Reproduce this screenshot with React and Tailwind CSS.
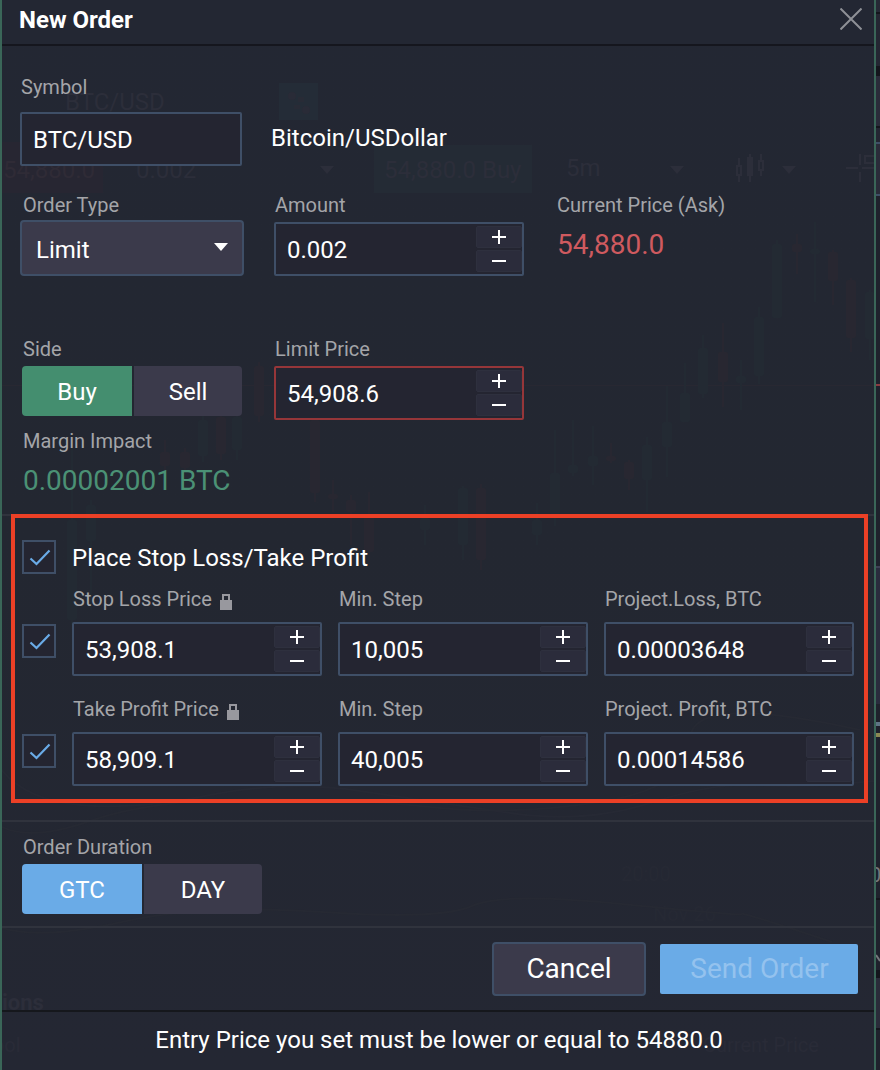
import React, { useState } from 'react';

const CANDLES = [
    // x, wickTop, wickBottom, bodyTop, bodyBottom, up
    [72, 440, 625, 520, 620, true],
    [91, 500, 610, 505, 541, true],
    [165, 440, 470, 452, 466, false],
    [185, 448, 470, 452, 468, false],
    [203, 415, 462, 420, 456, true],
    [221, 405, 460, 417, 454, false],
    [237, 410, 460, 417, 450, true],
    [259, 362, 422, 366, 416, false],
    [315, 415, 502, 420, 493, false],
    [333, 480, 512, 494, 499, false],
    [351, 495, 545, 500, 512, false],
    [369, 492, 560, 515, 552, false],
    [425, 505, 545, 518, 530, true],
    [463, 486, 560, 488, 545, true],
    [481, 484, 570, 488, 560, false],
    [537, 503, 545, 520, 535, true],
    [555, 430, 526, 473, 515, true],
    [573, 420, 476, 465, 473, true],
    [593, 426, 485, 456, 466, true],
    [611, 443, 463, 456, 461, false],
    [629, 460, 490, 462, 479, false],
    [647, 437, 512, 445, 480, true],
    [667, 386, 477, 422, 447, true],
    [685, 363, 422, 393, 422, true],
    [703, 335, 398, 348, 394, true],
    [723, 323, 407, 352, 382, false],
    [741, 360, 410, 376, 383, true],
    [759, 307, 384, 317, 376, true],
    [777, 240, 318, 244, 318, true],
    [797, 234, 274, 244, 252, false],
    [815, 222, 302, 249, 254, true],
    [833, 250, 305, 252, 281, false],
    [851, 278, 352, 280, 338, false],
    [870, 290, 360, 292, 339, true],
];

const Ghost = ({ className, children }) => (
    <span className={`absolute whitespace-nowrap ${className}`}>{children}</span>
);

/* Trading screen showing faintly through the dialog */
const Backdrop = () => (
    <div className='absolute inset-0 overflow-hidden text-[#2c2e3a]' aria-hidden='true'>
        <div className='absolute left-0 top-[142px] w-[101px] h-[51px] bg-[#272632]'></div>
        <div className='absolute left-[277px] top-[83px] w-[39px] h-[37px] bg-[#242c37]'></div>
        <div className='absolute left-[372px] top-[145px] w-[158px] h-[48px] bg-[#242b35]'></div>
        <Ghost className='left-[63px] top-[88px] text-2xl leading-7'>BTC/USD</Ghost>
        <Ghost className='left-[1px] top-[156px] text-2xl leading-7 text-[#2f2b36]'>54,880.0</Ghost>
        <Ghost className='left-[134px] top-[156px] text-2xl leading-7'>0.002</Ghost>
        <Ghost className='left-[382px] top-[156px] text-2xl leading-7'>54,880.0 Buy</Ghost>
        <Ghost className='left-[564px] top-[154px] text-2xl leading-7'>5m</Ghost>
        <Ghost className='left-0 top-[991px] text-[22px] leading-6 font-bold'>ions</Ghost>
        <Ghost className='left-[-9px] top-[1033px] text-xl leading-6 text-[#292b37]'>bol</Ghost>
        <Ghost className='left-[701px] top-[1033px] text-xl leading-6 text-[#292b37]'>Current Price</Ghost>
        <Ghost className='left-[619px] top-[862px] text-xl leading-6 text-[#262934]'>20:00</Ghost>
        <Ghost className='left-[651px] top-[902px] text-xl leading-6 text-[#262934]'>Nov 26</Ghost>
        <svg className='absolute left-[-2px] top-0' width='880' height='1070' fill='none'>
            <g fill='#2c2e3a'>
                <path d='M320 166h14l-7 8z' />
                <path d='M670 166h14l-7 8z' />
                <path d='M782 166h14l-7 8z' />
                <rect x='747' y='157' width='6' height='19' />
                <circle cx='292' cy='96' r='4' fill='#292b37' />
                <circle cx='306' cy='110' r='4' fill='#292b37' />
                <path d='M298 97h6v5h-6zM294 105h6v4h-6z' fill='#282b36' />
            </g>
            <g stroke='#2c2e3a' strokeWidth='2'>
                <path d='M739 158v8M739 175v7M750 154v28M761 154v7M761 170v6' />
                <rect x='737' y='166' width='4' height='9' />
                <rect x='759' y='161' width='4' height='9' />
                <path d='M846 168h12M862 168h12M860 154v11M860 172v10M865 156h12v7h-12z' />
            </g>
            <path d='M0 385.500H874' stroke='#282832' strokeWidth='1' />
            {CANDLES.map(([x, wt, wb, bt, bb, up]) => (
                <g key={x} fill={up ? '#232a33' : '#282731'}>
                    <rect x={x - 1} y={wt} width='2' height={wb - wt} />
                    <rect x={x - 5} y={bt} width='10' height={bb - bt} rx='2' />
                </g>
            ))}
            <path d='M0 768q25 32 80 37t130-10 150-4 150 22 140-10 110-18 114-4' stroke='#262934' strokeWidth='2' />
            <path d='M0 826q30 16 90-5t160-22 180 8 170-5 90-62 170-10' stroke='#262933' strokeWidth='2' />
            <path d='M2 928q40 12 120-6t200-10 150-6 150-2 120 10 90 28' stroke='#262933' strokeWidth='2' />
        </svg>
    </div>
);

const Label = ({ children }) => (
    <div className='flex items-start h-6 pl-px text-xl leading-6 text-[#a4a5a9] whitespace-nowrap'>{children}</div>
);

const LockIcon = () => (
    <svg className='ml-2 mt-[7px]' width='12' height='16' fill='none'>
        <path d='M3 7V1h6v6' stroke='#98989e' strokeWidth='2' />
        <path d='M0 6h12v10H0z' fill='#98989e' />
    </svg>
);

const NumberInput = ({ value, error }) => {
    const [text, setText] = useState(value);

    return (
        <div className={`flex w-[250px] h-[54px] border-2 rounded-[2px] bg-[#242531] ${error ? 'border-[#963639]' : 'border-[#3f4f67]'}`}>
            <input
                className='flex-1 min-w-0 pl-[11px] pt-0.5 text-2xl text-white bg-transparent outline-none'
                value={text}
                onChange={e => setText(e.target.value)}
            />
            <div className='flex flex-col gap-0.5 pt-0.5'>
                <button className='flex items-center justify-center w-[46px] h-[22px] border border-[#2e303e] rounded-[2px] bg-[#2b2c3b]'>
                    <svg width='14' height='14' fill='none' stroke='white' strokeWidth='2'>
                        <path d='M0 7h14M7 0v14' />
                    </svg>
                </button>
                <button className='flex items-center justify-center w-[46px] h-[22px] border border-[#2e303e] rounded-[2px] bg-[#2b2c3b]'>
                    <svg width='14' height='14' fill='none' stroke='white' strokeWidth='2'>
                        <path d='M0 7h14' />
                    </svg>
                </button>
            </div>
        </div>
    );
};

const NumberField = ({ label, value, error, locked, gap = 'gap-[5px]' }) => (
    <div className={`flex flex-col ${gap}`}>
        <Label>
            {label}
            {locked && <LockIcon />}
        </Label>
        <NumberInput value={value} error={error} />
    </div>
);

const Checkbox = () => {
    const [checked, setChecked] = useState(true);

    return (
        <button
            onClick={() => setChecked(!checked)}
            className='flex items-center justify-center shrink-0 w-[34px] h-[34px] border-2 border-[#3f4f67] bg-[#242531]'
        >
            {checked && (
                <svg className='ml-px' width='22' height='18' fill='none' stroke='#6aabe7' strokeWidth='2.200'>
                    <path d='M1.500 10.500l6 5.500L20.500 2.500' />
                </svg>
            )}
        </button>
    );
};

/* Edge of the main screen that the dialog leaves uncovered */
const ScreenEdge = () => (
    <div className='relative flex flex-col w-1 h-full bg-[#1f212c] overflow-hidden'>
        <div className='h-[12px] bg-[#262935]'></div>
        <div className='h-[2px] bg-[#14151c]'></div>
        <div className='h-[52px] bg-[#242632]'></div>
        <div className='h-[10px] bg-[#14151c]'></div>
        <div className='h-[50px] bg-[#2a2b39]'></div>
        <div className='h-[2px] bg-[#14151c]'></div>
        <div className='h-[14px] bg-[#242632]'></div>
        <div className='h-[54px] border-y-2 border-[#3f4f67] bg-[#2a2b39]'></div>
        <div className='h-[188px]'></div>
        <div className='h-[2px] bg-[#8b3a40]'></div>
        <div className='h-[180px]'></div>
        <div className='h-[138px] border-t-2 border-[#3f4055] bg-[#2a2b3d]'></div>
        <div className='h-[18px]'></div>
        <div className='h-[4px] bg-[#5f7484]'></div>
        <div className='h-[7px]'></div>
        <div className='h-[4px] bg-[#8c8953]'></div>
        <div className='h-[161px]'></div>
        <div className='h-[2px] bg-[#14151c]'></div>
        <div className='h-[70px]'></div>
        <div className='h-[8px] bg-[#14151c]'></div>
        <div className='h-[50px] bg-[#2a2b39]'></div>
        <div className='h-[2px] bg-[#14151c]'></div>
        <span className='absolute left-[-6px] top-[863px] text-xl leading-6 text-[#77787c]'>0</span>
        <svg className='absolute left-0 top-[952px]' width='4' height='18' fill='none'>
            <path d='M0 3l4 6' stroke='#77787c' strokeWidth='2' />
        </svg>
    </div>
);

const App = () => {
    const [side, setSide] = useState('buy');
    const [duration, setDuration] = useState('gtc');

    return (
        <div className="flex w-[880px] h-[1070px] overflow-hidden bg-[#232731] text-white font-['Roboto',sans-serif]">
            <div className='relative flex-1 border-x-2 border-[#3a6658] bg-linear-to-b from-[#232733] via-[#232731] to-[#242733]'>
                <Backdrop />
                <div className='relative flex flex-col h-full'>
                    {/* Header */}
                    <div className='flex justify-between h-[46px] pl-[17px] pr-[12px] border-b-2 border-[#15161e] bg-[#232733]'>
                        <h1 className='pt-[6px] text-2xl leading-7 font-bold'>New Order</h1>
                        <button className='h-[22px] mt-2'>
                            <svg width='22' height='22' fill='none' stroke='#8e9096' strokeWidth='2'>
                                <path d='M0.500 0.500l21 21M21.500 0.500l-21 21' />
                            </svg>
                        </button>
                    </div>

                    {/* Symbol */}
                    <div className='flex flex-col gap-[13px] pl-[18px] pt-[29px]'>
                        <Label>Symbol</Label>
                        <div className='flex items-center gap-[29px]'>
                            <input
                                className='w-[222px] h-[54px] pl-[11px] pt-0.5 border-2 border-[#3f4f67] rounded-[2px] bg-[#242531] text-2xl outline-none'
                                defaultValue='BTC/USD'
                            />
                            <span className='pb-0.5 text-2xl leading-7'>Bitcoin/USDollar</span>
                        </div>
                    </div>

                    {/* Order type and amount */}
                    <div className='flex pl-[18px] pt-[27px]'>
                        <div className='flex flex-col gap-[3px] w-[254px]'>
                            <div className='pl-0.5'>
                                <Label>Order Type</Label>
                            </div>
                            <button className='flex items-center justify-between w-[224px] h-14 pl-[14px] pr-[14px] border-2 border-[#3f4f67] rounded bg-[#3b3a4b] text-2xl'>
                                <span className='pt-[3px]'>Limit</span>
                                <svg className='mb-0.5' width='14' height='8' fill='white'>
                                    <path d='M0 0h14L7 8z' />
                                </svg>
                            </button>
                        </div>
                        <NumberField label='Amount' value='0.002' />
                        <div className='flex flex-col gap-3 pl-8'>
                            <Label>Current Price (Ask)</Label>
                            <span className='pl-px text-[28px] leading-8 text-[#cf5a5f]'>54,880.0</span>
                        </div>
                    </div>

                    {/* Side and limit price */}
                    <div className='flex h-[177px] pl-5 pt-[61px]'>
                        <div className='flex flex-col w-[252px]'>
                            <Label>Side</Label>
                            <div className='flex gap-0.5 pt-[5px] text-2xl'>
                                <button
                                    onClick={() => setSide('buy')}
                                    className={`w-[110px] h-[50px] pt-0.5 rounded-l ${side === 'buy' ? 'bg-[#448e6f]' : 'bg-[#3b3a4b]'}`}
                                >
                                    Buy
                                </button>
                                <button
                                    onClick={() => setSide('sell')}
                                    className={`w-[108px] h-[50px] pt-0.5 rounded-r ${side === 'sell' ? 'bg-[#963639]' : 'bg-[#3b3a4b]'}`}
                                >
                                    Sell
                                </button>
                            </div>
                            <div className='pt-[13px]'>
                                <Label>Margin Impact</Label>
                            </div>
                            <span className='pl-px pt-3 text-[28px] leading-8 text-[#4b9175]'>0.00002001 BTC</span>
                        </div>
                        <NumberField label='Limit Price' value='54,908.6' error />
                    </div>

                    {/* Stop loss / take profit */}
                    <div className='relative flex flex-col h-[306px] mt-[61px] pl-5 pt-6 border-t-2 border-[#30333d]'>
                        <div className='absolute left-[9px] -top-0.5 w-[857px] h-[289px] border-4 border-[#ec4026] pointer-events-none'></div>
                        <div className='flex items-center gap-4'>
                            <Checkbox />
                            <span className='pt-px text-2xl leading-7'>Place Stop Loss/Take Profit</span>
                        </div>
                        <div className='flex items-end gap-4 pt-[13px]'>
                            <div className='pb-[18px]'>
                                <Checkbox />
                            </div>
                            <NumberField label='Stop Loss Price' value='53,908.1' gap='gap-[11px]' locked />
                            <NumberField label='Min. Step' value='10,005' gap='gap-[11px]' />
                            <NumberField label='Project.Loss, BTC' value='0.00003648' gap='gap-[11px]' />
                        </div>
                        <div className='flex items-end gap-4 pt-[21px]'>
                            <div className='pb-[18px]'>
                                <Checkbox />
                            </div>
                            <NumberField label='Take Profit Price' value='58,909.1' gap='gap-[11px]' locked />
                            <NumberField label='Min. Step' value='40,005' gap='gap-[11px]' />
                            <NumberField label='Project. Profit, BTC' value='0.00014586' gap='gap-[11px]' />
                        </div>
                    </div>

                    {/* Order duration */}
                    <div className='h-[106px] pl-5 pt-[13px] border-t-2 border-[#30333d]'>
                        <Label>Order Duration</Label>
                        <div className='flex gap-0.5 pt-[5px] text-2xl'>
                            <button
                                onClick={() => setDuration('gtc')}
                                className={`w-[120px] h-[50px] pt-0.5 rounded-l ${duration === 'gtc' ? 'bg-[#6aabe7]' : 'bg-[#3b3a4b]'}`}
                            >
                                GTC
                            </button>
                            <button
                                onClick={() => setDuration('day')}
                                className={`w-[118px] h-[50px] pt-0.5 rounded-r ${duration === 'day' ? 'bg-[#6aabe7]' : 'bg-[#3b3a4b]'}`}
                            >
                                DAY
                            </button>
                        </div>
                    </div>

                    {/* Actions */}
                    <div className='flex items-start justify-end gap-3.5 h-[84px] pr-4 pt-3.5 border-t-2 border-[#30333d]'>
                        <button className='w-[154px] h-[54px] border-2 border-[#3f4f67] rounded bg-[#3b3a4b] text-[28px] leading-8'>
                            Cancel
                        </button>
                        <button className='w-[198px] h-[50px] mt-0.5 pl-px rounded-[2px] bg-[#6aabe7] text-[28px] leading-8 text-[#94c2ee]'>
                            Send Order
                        </button>
                    </div>

                    {/* Validation message */}
                    <div className='flex-1 pt-[14px] pl-0.5 border-t-2 border-[#15171c] text-2xl leading-7 text-center'>
                        Entry Price you set must be lower or equal to 54880.0
                    </div>
                </div>
            </div>
            <ScreenEdge />
        </div>
    );
};

export default App;
